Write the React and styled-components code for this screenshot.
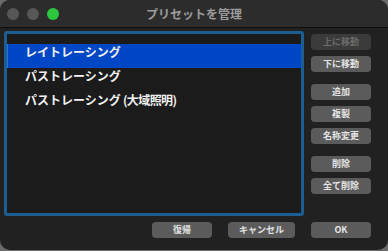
import React, { useState } from "react";
import styled, { createGlobalStyle } from "styled-components";

const GlobalStyle = createGlobalStyle`
  html, body {
    margin: 0;
    padding: 0;
    background: #6a6a6a;
  }
  body {
    font-family: "Noto Sans CJK JP", "Liberation Sans", sans-serif;
  }
`;

const Window = styled.div`
  width: 388px;
  height: 250px;
  border-radius: 10px;
  overflow: hidden;
  background: #212121;
  display: flex;
  flex-direction: column;
`;

const TitleBar = styled.div`
  position: relative;
  box-sizing: border-box;
  height: 28px;
  background: #2c2c2c;
  border-bottom: 1px solid #0e0e0e;
  display: flex;
  align-items: center;
  padding-left: 7px;
  gap: 8px;
`;

const Light = styled.span`
  width: 12px;
  height: 12px;
  border-radius: 50%;
  background: ${(p) => p.color};
`;

const Title = styled.div`
  position: absolute;
  left: 0;
  right: 0;
  top: 0;
  bottom: 0;
  display: flex;
  align-items: center;
  justify-content: center;
  color: #9c9c9c;
  font-size: 12px;
  font-weight: 700;
  pointer-events: none;
`;

const Body = styled.div`
  flex: 1;
  display: flex;
  flex-direction: column;
  padding: 3px 17px 0 4px;
`;

const Main = styled.div`
  display: flex;
  height: 185px;
`;

const List = styled.div`
  box-sizing: border-box;
  width: 305px;
  height: 185px;
  border: 3px solid #1c5d92;
  border-radius: 3px;
  background: #1b1b1b;
  padding-top: 10px;
`;

const Row = styled.div`
  box-sizing: border-box;
  height: 24px;
  padding-left: 17px;
  line-height: 16px;
  color: #f2f2f2;
  font-size: 12px;
  font-weight: 700;
  background: ${(p) => (p.$selected ? "#0047c6" : "transparent")};
  border-left: 1px solid ${(p) => (p.$selected ? "#2f6fe0" : "transparent")};
  cursor: default;
`;

const Paren = styled.span`
  letter-spacing: -0.6px;
`;

const Side = styled.div`
  margin-left: 7px;
  padding-top: 3px;
  display: flex;
  flex-direction: column;
  width: 60px;
`;

const Btn = styled.button`
  box-sizing: border-box;
  width: ${(p) => p.$w || 60}px;
  height: 16px;
  margin-top: ${(p) => p.$mt || 0}px;
  border: none;
  border-radius: 4px;
  padding: 0;
  background: ${(p) => (p.disabled ? "#3b3b3b" : "#5b5b5b")};
  color: ${(p) => (p.disabled ? "#6c6c6c" : "#e4e4e4")};
  font-family: "Noto Sans CJK JP", "Liberation Sans", sans-serif;
  font-size: 9px;
  font-weight: 700;
  line-height: 16px;
  display: flex;
  align-items: center;
  justify-content: center;
`;

const Footer = styled.div`
  margin-top: 6px;
  display: flex;
  justify-content: flex-end;
  gap: 16px;
`;

const presets = [
  { name: "レイトレーシング" },
  { name: "パストレーシング" },
  { name: "パストレーシング", note: "(大域照明)" },
];

export default function App() {
  const [selected, setSelected] = useState(0);

  return (
    <>
      <GlobalStyle />
      <Window>
        <TitleBar>
          <Light color="#575757" />
          <Light color="#575757" />
          <Light color="#2bc73f" />
          <Title>プリセットを管理</Title>
        </TitleBar>
        <Body>
          <Main>
            <List>
              {presets.map((p, i) => (
                <Row
                  key={i}
                  $selected={i === selected}
                  onClick={() => setSelected(i)}
                >
                  {p.name}
                  {p.note && <Paren> {p.note}</Paren>}
                </Row>
              ))}
            </List>
            <Side>
              <Btn disabled>上に移動</Btn>
              <Btn $mt={6}>下に移動</Btn>
              <Btn $mt={12}>追加</Btn>
              <Btn $mt={6}>複製</Btn>
              <Btn $mt={6}>名称変更</Btn>
              <Btn $mt={12}>削除</Btn>
              <Btn $mt={6}>全て削除</Btn>
            </Side>
          </Main>
          <Footer>
            <Btn>復帰</Btn>
            <Btn $w={67}>キャンセル</Btn>
            <Btn>OK</Btn>
          </Footer>
        </Body>
      </Window>
    </>
  );
}
